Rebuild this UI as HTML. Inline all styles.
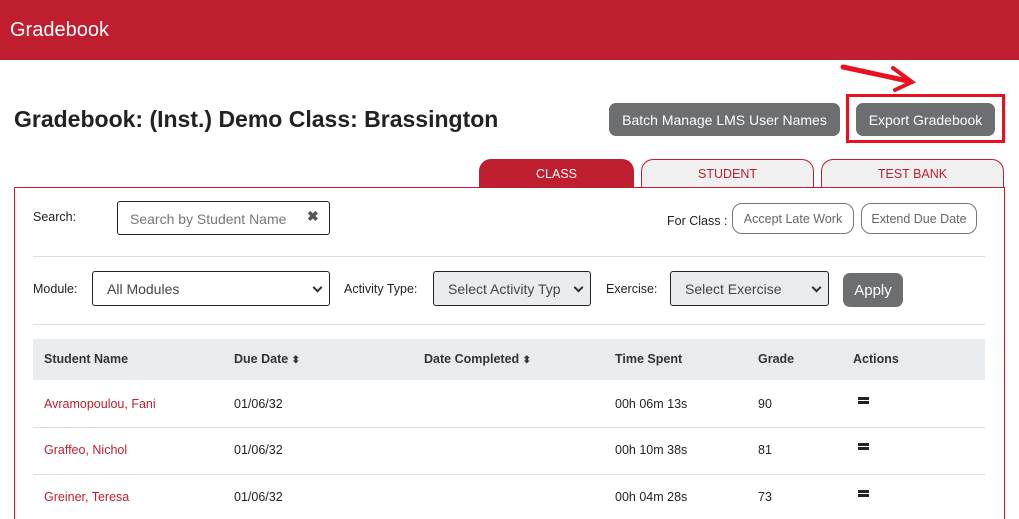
<!DOCTYPE html>
<html><head><style>
*{box-sizing:border-box;margin:0;padding:0}
html,body{width:1019px;height:519px;overflow:hidden}
body{background:#fff;font-family:"Liberation Sans",sans-serif;position:relative;color:#222}
.a{position:absolute;white-space:nowrap}
.btn{position:absolute;background:#6d6e70;color:#fff;border-radius:7px;font-size:14px;display:flex;align-items:center;justify-content:center}
.ob{position:absolute;border:1px solid #777;border-radius:10px;font-size:12.5px;color:#666;display:flex;align-items:center;justify-content:center}
.tab{position:absolute;top:159px;height:29px;border:1px solid #be1e2d;border-bottom:none;border-radius:12px 12px 0 0;background:#f0f0f0;color:#be1e2d;font-size:12.5px;display:flex;align-items:center;justify-content:center}
.sel{position:absolute;border:1px solid #222;border-radius:3px;font-size:14px;color:#444;display:flex;align-items:center;padding-left:14px}
.sel:after{content:"";position:absolute;right:8px;top:50%;width:5px;height:5px;border-right:2px solid #333;border-bottom:2px solid #333;transform:translateY(-70%) rotate(45deg)}
.lbl{position:absolute;font-size:12.5px;color:#222}
.th{position:absolute;top:352px;font-size:12.5px;font-weight:bold;color:#333}
.td{position:absolute;font-size:12.5px;color:#222}
.hr{position:absolute;left:33px;width:952px;height:1px;background:#ddd}
.eq{position:absolute;width:11px;height:7px;border-top:3px solid #222;border-bottom:3px solid #222}
</style></head><body>
<div class="a" style="left:0;top:0;width:1019px;height:60px;background:#be1e2d"></div>
<div class="a" style="left:10px;top:19px;color:#fff;font-size:20px">Gradebook</div>
<div class="a" style="left:14px;top:106px;font-size:23px;font-weight:bold;color:#222">Gradebook: (Inst.) Demo Class: Brassington</div>
<div class="btn" style="left:609px;top:103px;width:231px;height:33px">Batch Manage LMS User Names</div>
<div class="btn" style="left:856px;top:103px;width:139px;height:33px">Export Gradebook</div>
<div class="a" style="left:846px;top:94px;width:159px;height:49px;border:3px solid #e8101e"></div>
<svg class="a" style="left:838px;top:60px" width="80" height="35"><path d="M5 7 L70 21" stroke="#e8101e" stroke-width="5" stroke-linecap="round"/><path d="M55 8 L74 22 L57 30" stroke="#e8101e" stroke-width="4" fill="none" stroke-linecap="round"/></svg>
<div class="tab" style="left:479px;width:155px;background:#be1e2d;color:#fff">CLASS</div>
<div class="tab" style="left:641px;width:173px">STUDENT</div>
<div class="tab" style="left:821px;width:183px">TEST BANK</div>
<div class="a" style="left:14px;top:187px;width:991px;height:332px;border:1px solid #be1e2d;border-bottom:none"></div>
<div class="lbl" style="left:33px;top:210px">Search:</div>
<div class="a" style="left:117px;top:201px;width:213px;height:34px;border:1px solid #222;border-radius:3px;font-size:14px;color:#777;padding:9px 0 0 12px">Search by Student Name</div>
<div class="a" style="left:307px;top:208px;font-size:14px;font-weight:bold;color:#555">✖</div>
<div class="lbl" style="left:667px;top:214px">For Class :</div>
<div class="ob" style="left:732px;top:203px;width:122px;height:31px">Accept Late Work</div>
<div class="ob" style="left:861px;top:203px;width:116px;height:31px">Extend Due Date</div>
<div class="hr" style="top:256px"></div>
<div class="lbl" style="left:33px;top:282px">Module:</div>
<div class="sel" style="left:92px;top:271px;width:238px;height:35px">All Modules</div>
<div class="lbl" style="left:344px;top:282px">Activity Type:</div>
<div class="sel" style="left:433px;top:271px;width:158px;height:35px;background:#e9ecef;overflow:hidden">Select Activity Typ</div>
<div class="lbl" style="left:606px;top:282px">Exercise:</div>
<div class="sel" style="left:670px;top:271px;width:159px;height:35px;background:#e9ecef">Select Exercise</div>
<div class="btn" style="left:843px;top:273px;width:60px;height:34px;font-size:15px">Apply</div>
<div class="hr" style="top:324px"></div>
<div class="a" style="left:33px;top:339px;width:952px;height:41px;background:#e9ecef"></div>
<div class="th" style="left:44px">Student Name</div>
<div class="th" style="left:234px">Due Date <span style="font-size:10px">⬍</span></div>
<div class="th" style="left:424px">Date Completed <span style="font-size:10px">⬍</span></div>
<div class="th" style="left:615px">Time Spent</div>
<div class="th" style="left:758px">Grade</div>
<div class="th" style="left:853px">Actions</div>
<div class="td" style="left:44px;top:397px;color:#be1e2d">Avramopoulou, Fani</div>
<div class="td" style="left:234px;top:397px">01/06/32</div>
<div class="td" style="left:615px;top:397px">00h 06m 13s</div>
<div class="td" style="left:758px;top:397px">90</div>
<div class="eq" style="left:858px;top:397px"></div>
<div class="hr" style="top:427px"></div>
<div class="td" style="left:44px;top:443px;color:#be1e2d">Graffeo, Nichol</div>
<div class="td" style="left:234px;top:443px">01/06/32</div>
<div class="td" style="left:615px;top:443px">00h 10m 38s</div>
<div class="td" style="left:758px;top:443px">81</div>
<div class="eq" style="left:858px;top:443px"></div>
<div class="hr" style="top:474px"></div>
<div class="td" style="left:44px;top:490px;color:#be1e2d">Greiner, Teresa</div>
<div class="td" style="left:234px;top:490px">01/06/32</div>
<div class="td" style="left:615px;top:490px">00h 04m 28s</div>
<div class="td" style="left:758px;top:490px">73</div>
<div class="eq" style="left:858px;top:490px"></div>
</body></html>
